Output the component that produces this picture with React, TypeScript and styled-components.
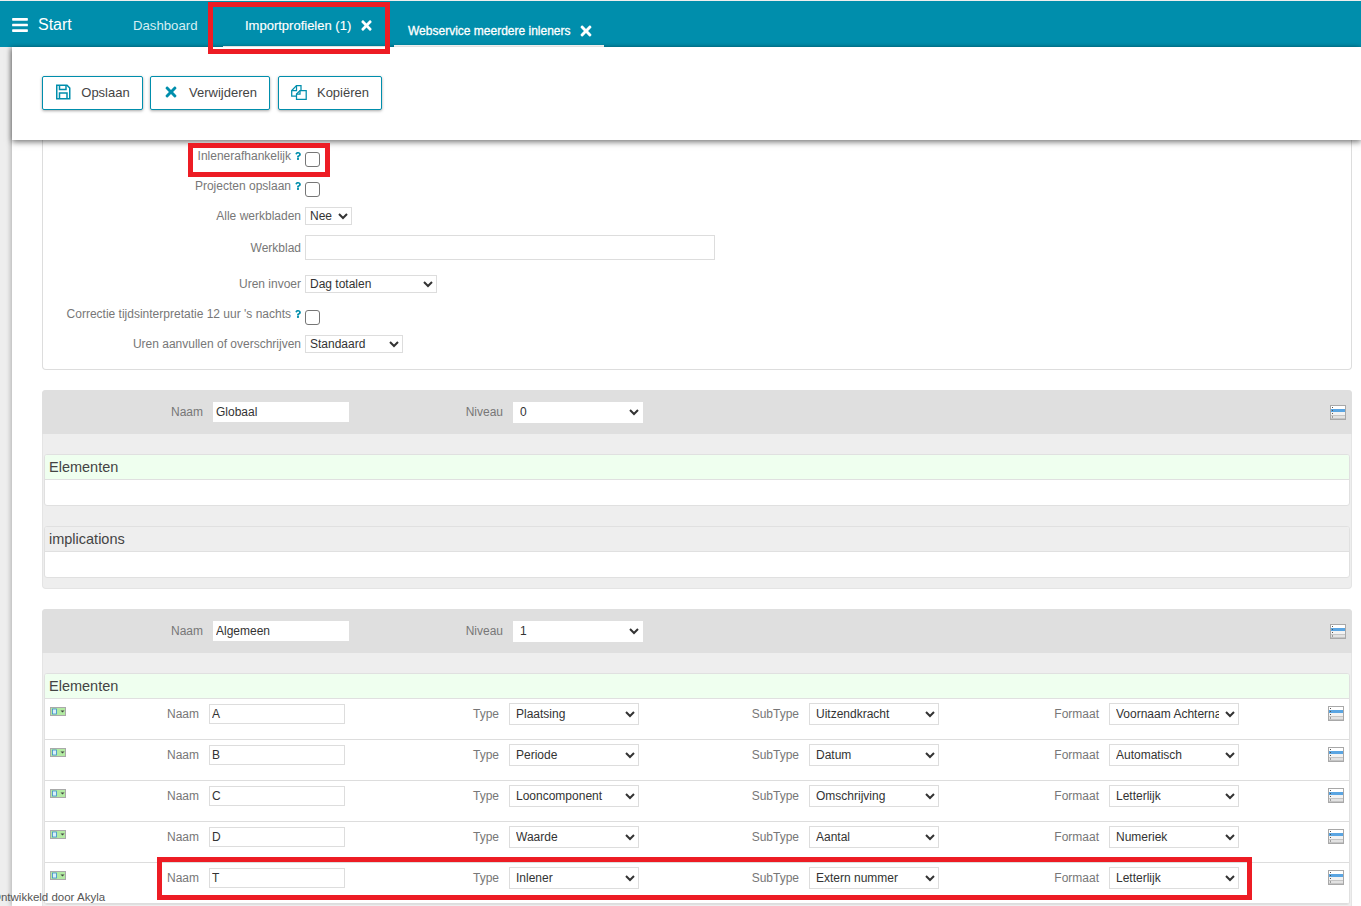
import React from "react";
import styled, { createGlobalStyle } from "styled-components";
import { FaBars, FaTimes, FaQuestion } from "react-icons/fa";

const teal = "#008eac";

const GlobalStyle = createGlobalStyle`
  html, body {
    margin: 0;
    height: 906px;
    overflow: hidden;
    background: #eeeeee;
    font-family: "Liberation Sans", Arial, sans-serif;
  }
`;

const Page = styled.div`
  position: relative;
  width: 1361px;
  height: 906px;
  overflow: hidden;
`;

const Header = styled.header`
  display: flex;
  align-items: stretch;
  height: 46px;
  margin-top: 1px;
  background: ${teal};
  color: #fff;
`;

const Brand = styled.div`
  display: flex;
  align-items: center;
  width: 133px;
  padding: 1px 0 0 11px;
  box-sizing: border-box;
  font-size: 16px;
  gap: 9px;
`;

const DashboardLink = styled.div`
  display: flex;
  align-items: center;
  width: 90px;
  padding-top: 2px;
  font-size: 13.2px;
  color: #d6eef3;
`;

const Tab = styled.div<{ $width: number; $small?: boolean }>`
  display: flex;
  align-items: center;
  gap: ${(p) => (p.$small ? 7 : 8)}px;
  box-sizing: border-box;
  width: ${(p) => p.$width}px;
  padding-left: ${(p) => (p.$small ? 14 : 22)}px;
  padding-top: ${(p) => (p.$small ? 15 : 4)}px;
  border-bottom: ${(p) => (p.$small ? 2 : 1)}px solid #fff;
  font-size: ${(p) => (p.$small ? 12 : 13)}px;
  -webkit-text-stroke: ${(p) => (p.$small ? 0.3 : 0.15)}px #fff;
  margin-right: ${(p) => (p.$small ? 0 : 4)}px;
`;

const Main = styled.main`
  margin-left: 12px;
  height: 859px;
  background: #fff;
  box-shadow: -2px 0 4px rgba(0, 0, 0, 0.2);
`;

const Toolbar = styled.div`
  position: relative;
  z-index: 2;
  display: flex;
  gap: 7px;
  height: 93px;
  padding: 29px 0 0 30px;
  box-sizing: border-box;
  background: #fff;
  box-shadow: 0 2px 6px rgba(0, 0, 0, 0.55);
`;

const ToolButton = styled.button<{ $width: number; $ml?: number }>`
  display: flex;
  align-items: center;
  justify-content: center;
  gap: 10px;
  width: ${(p) => p.$width}px;
  height: 34px;
  margin-left: ${(p) => p.$ml ?? 0}px;
  padding: 0 0 2px;
  border: 1px solid ${teal};
  border-radius: 2px;
  background: #fff;
  box-shadow: 0 1px 3px rgba(0, 0, 0, 0.35);
  color: #444;
  font-family: inherit;
  font-size: 13px;
  svg {
    color: ${teal};
    flex: none;
  }
`;

const Content = styled.div`
  padding: 0 9px 0 30px;
`;

const SettingsBox = styled.div`
  height: 228px;
  border: 1px solid #ddd;
  border-top: 0;
  border-radius: 0 0 4px 4px;
  padding-top: 1px;
  box-sizing: content-box;
`;

const SettingRow = styled.div<{ $height?: number; $mb?: number }>`
  display: flex;
  align-items: center;
  height: ${(p) => p.$height ?? 30}px;
  margin-bottom: ${(p) => p.$mb ?? 0}px;
`;

const SettingLabel = styled.label`
  display: flex;
  justify-content: flex-end;
  align-items: center;
  gap: 4px;
  width: 258px;
  margin-right: 4px;
  color: #777;
  font-size: 12px;
  white-space: nowrap;
`;

const Help = styled.span`
  display: inline-flex;
  justify-content: center;
  width: 6px;
  color: ${teal};
  font-size: 10px;
`;

const Check = styled.span`
  display: block;
  width: 13px;
  height: 13px;
  margin-top: 7px;
  border: 1px solid #767676;
  border-radius: 3px;
  background: #fff;
`;

const Select = styled.select<{ $w: number; $h?: number; $pad?: number; $flat?: boolean }>`
  width: ${(p) => p.$w}px;
  height: ${(p) => p.$h ?? 22}px;
  padding: 0 3px 0 ${(p) => p.$pad ?? 2}px;
  box-sizing: border-box;
  border: 1px solid ${(p) => (p.$flat ? "#fff" : "#ddd")};
  border-radius: 0;
  background: #fff;
  color: #333;
  font-family: inherit;
  font-size: 12px;
`;

const TextInput = styled.input<{ $w: number; $h?: number; $flat?: boolean }>`
  width: ${(p) => p.$w}px;
  height: ${(p) => p.$h ?? 21}px;
  padding: 0 2px;
  box-sizing: border-box;
  border: ${(p) => (p.$flat ? "0" : "1px solid #ddd")};
  ${(p) => (p.$flat ? "padding-left: 3px;" : "")}
  border-radius: 0;
  background: #fff;
  color: #333;
  font-family: inherit;
  font-size: 12px;
  outline: none;
`;

const RowInput = styled(TextInput)`
  margin-top: 1px;
`;

const Panel = styled.section<{ $height: number }>`
  height: ${(p) => p.$height}px;
  margin-top: 20px;
  background: #eeeeee;
  border: 1px solid #e4e4e4;
  border-top: 0;
  border-radius: 4px;
  box-sizing: border-box;
`;

const PanelHead = styled.div`
  display: flex;
  align-items: center;
  height: 44px;
  margin: 0 -1px;
  padding-right: 6px;
  background: #dfdfdf;
  border-radius: 4px 4px 0 0;
`;

const FieldLabel = styled.span<{ $w: number }>`
  width: ${(p) => p.$w}px;
  margin-right: 10px;
  flex: none;
  text-align: right;
  color: #777;
  font-size: 12px;
`;

const EndIcon = styled.span`
  display: flex;
  margin-left: auto;
`;

const SubBox = styled.div`
  margin: 20px 1px 0;
  background: #fff;
  border: 1px solid #e0e0e0;
  border-radius: 3px;
  overflow: hidden;
`;

const SubTitle = styled.div<{ $green?: boolean }>`
  height: 24px;
  padding-left: 4px;
  line-height: 25px;
  background: ${(p) => (p.$green ? "#efffef" : "#eeeeee")};
  border-bottom: 1px solid #e0e0e0;
  color: #444;
  font-size: 14.5px;
`;

const SubEmpty = styled.div`
  height: 25px;
`;

const ElementRow = styled.div`
  display: flex;
  align-items: flex-start;
  box-sizing: border-box;
  height: 41px;
  padding: 4px 5px 0 5px;
  border-bottom: 1px solid #ddd;
`;

const Handle = styled.span`
  display: block;
  flex: none;
  width: 16px;
  height: 9px;
  margin-top: 4px;
  svg {
    display: block;
  }
`;

const RowLabel = styled(FieldLabel)`
  margin-top: 1px;
  line-height: 21px;
`;

const RowIcon = styled.span`
  display: flex;
  margin-left: auto;
  margin-top: 3px;
`;

const Credit = styled.div`
  position: absolute;
  left: -8px;
  top: 891px;
  z-index: 3;
  color: #555;
  font-size: 11.5px;
  white-space: nowrap;
`;

const Highlight = styled.div<{ $x: number; $y: number; $w: number; $h: number }>`
  position: absolute;
  left: ${(p) => p.$x}px;
  top: ${(p) => p.$y}px;
  width: ${(p) => p.$w}px;
  height: ${(p) => p.$h}px;
  box-sizing: border-box;
  border: 5px solid #ed1c24;
  z-index: 4;
  pointer-events: none;
`;

const ListIcon = () => (
  <svg width="16" height="15" viewBox="0 0 16 15">
    <rect x="0" y="0" width="16" height="15" fill="#a8a8a8" />
    <rect x="1" y="1" width="14" height="3" fill="#fff" />
    <rect x="1" y="4" width="14" height="3" fill="#5aa5e2" />
    <rect x="1" y="7" width="14" height="3" fill="#f2f2f2" />
    <rect x="1" y="10.5" width="14" height="3" fill="#e2e2e2" />
    <path d="M2 2.5h1M2 5.5h1M2 8.5h1M2 12h1" stroke="#555" />
  </svg>
);

const HandleIcon = () => (
  <Handle>
    <svg width="16" height="9" viewBox="0 0 16 9">
      <rect x="0" y="0" width="16" height="9" fill="#a9a9a9" />
      <rect x="1" y="1" width="14" height="7" fill="#b2eaa2" />
      <rect x="2.5" y="2" width="4" height="5" fill="#d8f0f8" stroke="#3a8ccc" strokeWidth="0.8" />
      <path d="M10.5 3.5h4l-2 2z" fill="#444" />
    </svg>
  </Handle>
);

const SaveIcon = () => (
  <svg width="16" height="16" viewBox="0 0 16 16" fill="none" stroke={teal} strokeWidth="1.5">
    <path d="M1.75 1.25H12L14.75 4V14.75H1.75Z" />
    <path d="M4.5 1.25V5.5H11V1.25" />
    <path d="M4.5 14.75V9H12V14.75" />
  </svg>
);

const FilesIcon = () => (
  <svg width="16" height="15" viewBox="0 0 16 15" fill="none" stroke={teal} strokeWidth="1.25">
    <path d="M10 5.5V0.6H5.5L0.7 5.5V11H5.5" />
    <path d="M5.5 0.6V5.5H0.7" />
    <path d="M9 5.5H15.2V14.4H5.5V9Z" />
    <path d="M9 5.5V9H5.5" />
  </svg>
);

const Choice = ({ w, h, pad, flat, value }: { w: number; h?: number; pad?: number; flat?: boolean; value: string }) => (
  <Select $w={w} $h={h} $pad={pad} $flat={flat} defaultValue={value}>
    <option>{value}</option>
  </Select>
);

const rows = [
  { name: "A", type: "Plaatsing", sub: "Uitzendkracht", format: "Voornaam Achternaam" },
  { name: "B", type: "Periode", sub: "Datum", format: "Automatisch" },
  { name: "C", type: "Looncomponent", sub: "Omschrijving", format: "Letterlijk" },
  { name: "D", type: "Waarde", sub: "Aantal", format: "Numeriek" },
  { name: "T", type: "Inlener", sub: "Extern nummer", format: "Letterlijk" },
];

const PanelHeader = ({ name, level }: { name: string; level: string }) => (
  <PanelHead>
    <FieldLabel $w={161}>Naam</FieldLabel>
    <TextInput $w={136} $h={20} $flat defaultValue={name} />
    <FieldLabel $w={154}>Niveau</FieldLabel>
    <Choice w={130} h={21} flat value={level} />
    <EndIcon>
      <ListIcon />
    </EndIcon>
  </PanelHead>
);

const App = (): JSX.Element => {
  return (
    <Page>
      <GlobalStyle />
      <Header>
        <Brand>
          <FaBars size={18} />
          Start
        </Brand>
        <DashboardLink>Dashboard</DashboardLink>
        <Tab $width={167}>
          Importprofielen (1)
          <FaTimes size={15} />
        </Tab>
        <Tab $width={210} $small>
          Webservice meerdere inleners
          <FaTimes size={16} />
        </Tab>
      </Header>
      <Main>
        <Toolbar>
          <ToolButton $width={101}>
            <SaveIcon />
            Opslaan
          </ToolButton>
          <ToolButton $width={120}>
            <FaTimes size={16} />
            Verwijderen
          </ToolButton>
          <ToolButton $width={104} $ml={1}>
            <FilesIcon />
            Kopiëren
          </ToolButton>
        </Toolbar>
        <Content>
          <SettingsBox>
            <SettingRow>
              <SettingLabel>
                Inlenerafhankelijk
                <Help>
                  <FaQuestion />
                </Help>
              </SettingLabel>
              <Check />
            </SettingRow>
            <SettingRow>
              <SettingLabel>
                Projecten opslaan
                <Help>
                  <FaQuestion />
                </Help>
              </SettingLabel>
              <Check />
            </SettingRow>
            <SettingRow>
              <SettingLabel>Alle werkbladen</SettingLabel>
              <Choice w={47} h={18} pad={0} value="Nee" />
            </SettingRow>
            <SettingRow $height={33} $mb={5}>
              <SettingLabel>Werkblad</SettingLabel>
              <TextInput $w={410} $h={25} />
            </SettingRow>
            <SettingRow>
              <SettingLabel>Uren invoer</SettingLabel>
              <Choice w={132} h={18} pad={0} value="Dag totalen" />
            </SettingRow>
            <SettingRow>
              <SettingLabel>
                Correctie tijdsinterpretatie 12 uur 's nachts
                <Help>
                  <FaQuestion />
                </Help>
              </SettingLabel>
              <Check />
            </SettingRow>
            <SettingRow>
              <SettingLabel>Uren aanvullen of overschrijven</SettingLabel>
              <Choice w={98} h={18} pad={0} value="Standaard" />
            </SettingRow>
          </SettingsBox>

          <Panel $height={199}>
            <PanelHeader name="Globaal" level="0" />
            <SubBox>
              <SubTitle $green>Elementen</SubTitle>
              <SubEmpty />
            </SubBox>
            <SubBox>
              <SubTitle>implications</SubTitle>
              <SubEmpty />
            </SubBox>
          </Panel>

          <Panel $height={320}>
            <PanelHeader name="Algemeen" level="1" />
            <SubBox>
              <SubTitle $green>Elementen</SubTitle>
              {rows.map((row) => (
                <ElementRow key={row.name}>
                  <HandleIcon />
                  <RowLabel $w={133}>Naam</RowLabel>
                  <RowInput $w={136} $h={20} defaultValue={row.name} />
                  <RowLabel $w={154}>Type</RowLabel>
                  <Choice w={130} value={row.type} />
                  <RowLabel $w={160}>SubType</RowLabel>
                  <Choice w={130} value={row.sub} />
                  <RowLabel $w={160}>Formaat</RowLabel>
                  <Choice w={130} value={row.format} />
                  <RowIcon>
                    <ListIcon />
                  </RowIcon>
                </ElementRow>
              ))}
            </SubBox>
          </Panel>
        </Content>
      </Main>
      <Credit>Ontwikkeld door Akyla</Credit>
      <Highlight $x={208} $y={2} $w={182} $h={52} />
      <Highlight $x={188} $y={143} $w={142} $h={34} />
      <Highlight $x={157} $y={857} $w={1095} $h={43} />
    </Page>
  );
};

export default App;
